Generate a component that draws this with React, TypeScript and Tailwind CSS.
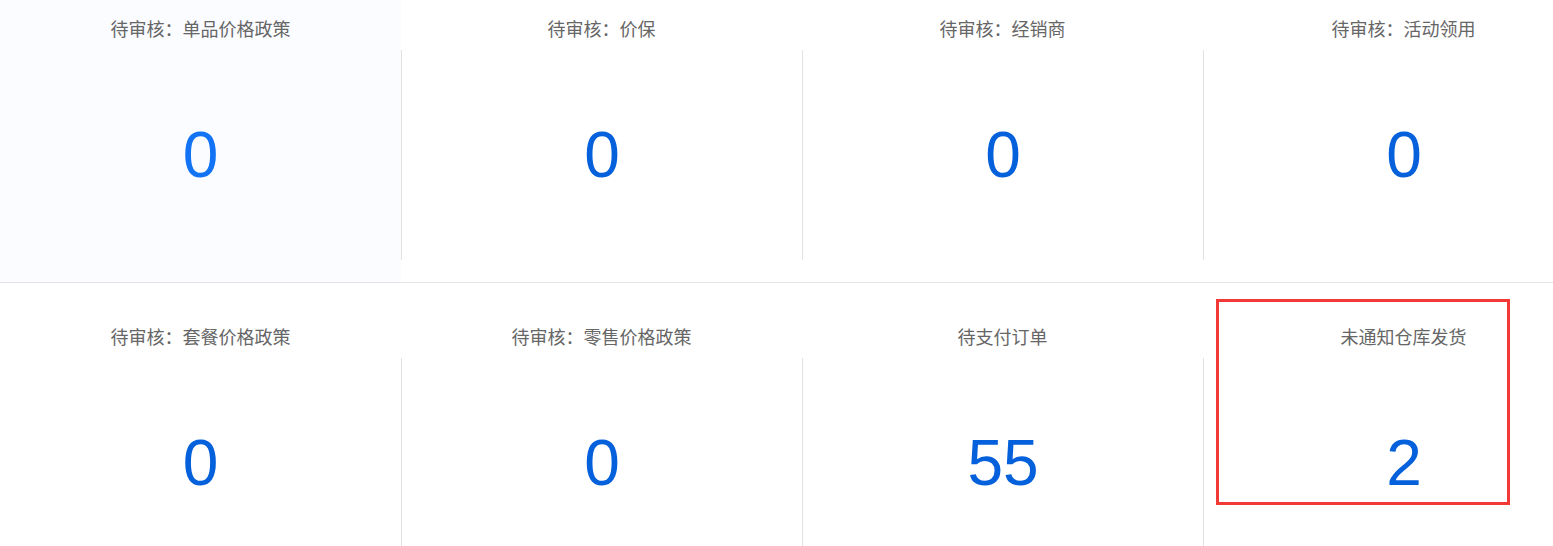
const rows = [
  [
    { title: '待审核：单品价格政策', value: 0 },
    { title: '待审核：价保', value: 0 },
    { title: '待审核：经销商', value: 0 },
    { title: '待审核：活动领用', value: 0 },
  ],
  [
    { title: '待审核：套餐价格政策', value: 0 },
    { title: '待审核：零售价格政策', value: 0 },
    { title: '待支付订单', value: 55 },
    { title: '未通知仓库发货', value: 2 },
  ],
];

function StatCell({ title, value, first, hovered }: { title: string; value: number; first: boolean; hovered: boolean }) {
  return (
    <div className={`pt-[35px] pb-[22px] ${hovered ? 'bg-[#fafcff]' : ''}`}>
      <div className="h-[40px] flex items-center justify-center text-[18px] leading-none text-[#666]">
        {title}
      </div>
      <div
        className={`h-[210px] flex items-center justify-center ${first ? '' : 'border-l border-[#e2e2e2]'}`}
      >
        <span
          className={`text-[64px] leading-none ${hovered ? 'text-[#1273f5]' : 'text-[#0560dc]'}`}
          style={{ fontFamily: '"Liberation Sans", Arial, sans-serif' }}
        >
          {value}
        </span>
      </div>
    </div>
  );
}

export default function App() {
  return (
    <div
      className="relative w-full h-[546px] overflow-hidden bg-white"
      style={{ fontFamily: '"Liberation Sans", "Noto Sans CJK SC", sans-serif' }}
    >
      <div className="-mt-[25px]">
        {rows.map((row, r) => (
          <div key={r} className="grid grid-cols-4 w-[1604px] border-b border-[#e4e4e4]">
            {row.map((cell, i) => (
              <StatCell key={i} title={cell.title} value={cell.value} first={i === 0} hovered={r === 0 && i === 0} />
            ))}
          </div>
        ))}
      </div>

      {/* highlight annotation */}
      <div className="absolute left-[1216px] top-[299px] w-[294px] h-[206px] border-[3px] border-[#f33936]" />
    </div>
  );
}
